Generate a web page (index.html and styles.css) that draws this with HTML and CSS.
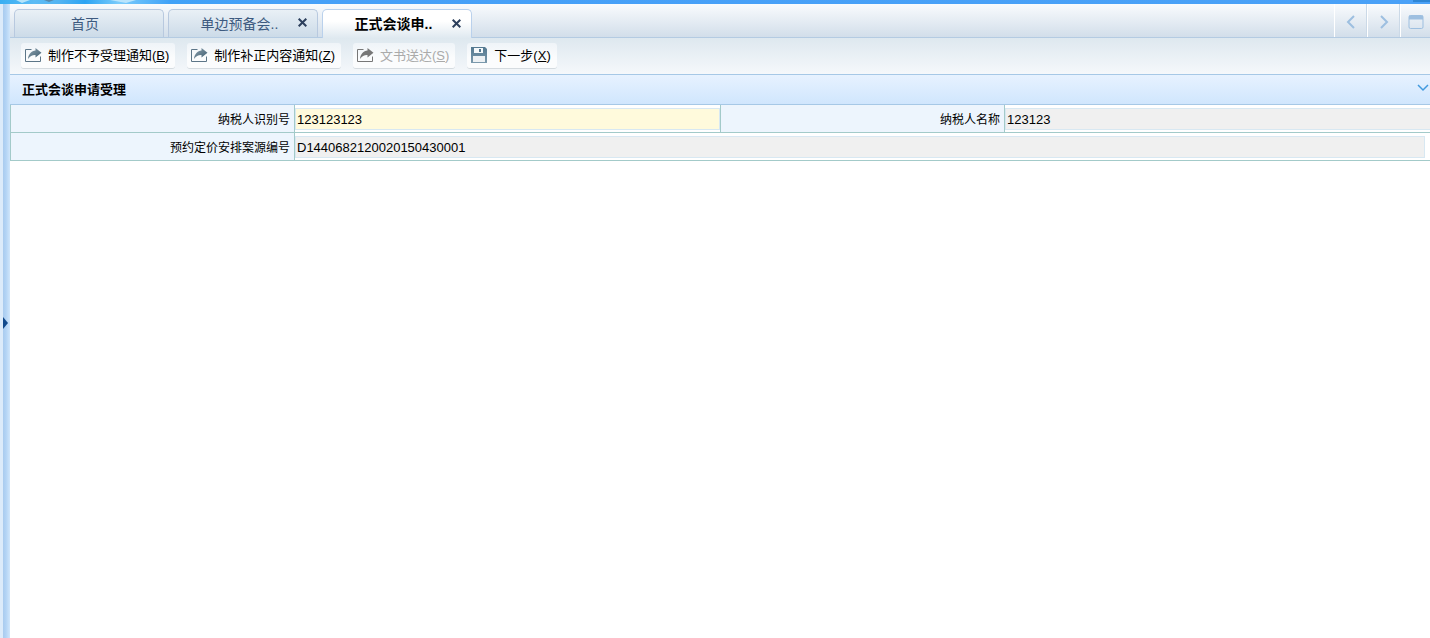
FILE: index.html
```html
<!DOCTYPE html>
<html lang="zh-CN">
<head>
<meta charset="utf-8">
<title>正式会谈申请受理</title>
<link rel="stylesheet" href="styles.css">
</head>
<body>
<svg class="defs" aria-hidden="true">
  <defs>
    <linearGradient id="arrow" x1="0" y1="0" x2="1" y2="1"><stop offset="0" stop-color="#8ba0ad"/><stop offset="1" stop-color="#3e5d70"/></linearGradient>
    <linearGradient id="disk" x1="0" y1="0" x2="0" y2="1"><stop offset="0" stop-color="#54788f"/><stop offset="1" stop-color="#7c9aad"/></linearGradient>
    <linearGradient id="clouds" x1="0" y1="0" x2="1" y2="0">
      <stop offset="0" stop-color="#38aef2"/><stop offset=".2" stop-color="#5cbcf5"/><stop offset=".35" stop-color="#52b4f2"/><stop offset=".5" stop-color="#2ba4f3"/><stop offset=".7" stop-color="#7cccfb"/><stop offset=".85" stop-color="#5cb8fa"/><stop offset="1" stop-color="#40a2f7"/>
    </linearGradient>
    <symbol id="share" viewBox="0 0 17 16">
      <path d="M6.500 2.500H.5v12h15V9.500" fill="none" stroke="#5d7688"/>
      <path d="M10.500 1 16.500 5.800 10.500 10.500V8C7.500 7.800 5 9 3 12 3.500 7 6.500 4 10.500 3.600z" fill="url(#arrow)"/>
    </symbol>
    <symbol id="share-off" viewBox="0 0 17 16">
      <path d="M6.500 2.500H.5v12h15V9.500" fill="none" stroke="#777"/>
      <path d="M10.500 1 16.500 5.800 10.500 10.500V8C7.500 7.800 5 9 3 12 3.500 7 6.500 4 10.500 3.600z" fill="#777"/>
    </symbol>
  </defs>
</svg>
<div class="sky">
  <svg width="170" height="4" viewBox="0 0 170 4" aria-hidden="true">
    <path d="M0 0h170v4H0z" fill="url(#clouds)"/><path d="M16 0h14l-8 3z" fill="#b5e4fa"/><path d="M44 0h10l-5 2z" fill="#5689ad"/>
    <path d="M110 0h26l-10 3z" fill="#b9e4fc"/>
  </svg>
  <span class="sky-end"></span>
</div>
<div class="frame">
  <div class="splitter">
    <button class="expand" aria-label="展开菜单"><svg width="5" height="12" viewBox="0 0 5 12"><path d="M0 0l5 6-5 6z" fill="#124a8c"/></svg></button>
  </div>
  <main class="main">
    <nav class="tabbar">
      <div class="tab"><button class="tab-name">首页</button></div>
      <div class="tab">
        <button class="tab-name">单边预备会..</button>
        <button class="close" aria-label="关闭"><svg width="9" height="9" viewBox="0 0 9 9"><path d="M.7.7l7.600 7.600M8.300.7L.7 8.300"/></svg></button>
      </div>
      <div class="tab active">
        <button class="tab-name">正式会谈申..</button>
        <button class="close" aria-label="关闭"><svg width="9" height="9" viewBox="0 0 9 9"><path d="M.7.7l7.600 7.600M8.300.7L.7 8.300"/></svg></button>
      </div>
      <div class="tab-tools">
        <button class="tool" aria-label="向左"><svg width="16" height="16" viewBox="0 0 16 16"><path d="M11 2L5 8l6 6"/></svg></button>
        <button class="tool" aria-label="向右"><svg width="16" height="16" viewBox="0 0 16 16"><path d="M5 2l6 6-6 6"/></svg></button>
        <button class="tool" aria-label="最大化"><svg width="16" height="16" viewBox="0 0 16 16"><rect class="thin" x="1" y="1.500" width="14" height="13" rx="1.500"/><path d="M1 3.500h14" /></svg></button>
      </div>
    </nav>
    <div class="toolbar">
      <button class="action"><svg class="icon"><use href="#share"/></svg><span>制作不予受理通知(<u>B</u>)</span></button>
      <button class="action"><svg class="icon"><use href="#share"/></svg><span>制作补正内容通知(<u>Z</u>)</span></button>
      <button class="action" disabled><svg class="icon"><use href="#share-off"/></svg><span>文书送达(<u>S</u>)</span></button>
      <button class="action"><svg class="icon" viewBox="0 0 17 16"><path d="M0 0h14l2 2v14H0z" fill="url(#disk)"/><path d="M3 1h9v5H3z" fill="#f4f8fa"/><path d="M8 2h2v3H8z" fill="#54788f"/><path d="M2 9h12v6H2z" fill="#edf1f4"/></svg><span>下一步(<u>X</u>)</span></button>
    </div>
    <section>
      <header class="panel-head">
        <h1>正式会谈申请受理</h1>
        <button class="collapse" aria-label="收起"><svg width="12" height="8" viewBox="0 0 12 8"><path d="M1 1l5 5 5-5" fill="none" stroke="#429ade" stroke-width="1.500"/></svg></button>
      </header>
      <div class="form">
        <label for="tax-id">纳税人识别号</label>
        <div class="cell"><input class="required" id="tax-id" value="123123123"></div>
        <label for="tax-name">纳税人名称</label>
        <div class="cell flush"><input id="tax-name" value="123123" readonly></div>
        <label for="case-no">预约定价安排案源编号</label>
        <div class="cell wide"><input id="case-no" value="D1440682120020150430001" readonly></div>
      </div>
    </section>
  </main>
</div>
</body>
</html>
```
FILE: styles.css
```css
* { box-sizing: border-box; }
body {
  margin: 0;
  height: 100vh;
  display: flex;
  flex-direction: column;
  overflow: hidden;
  background: #fff;
  color: #000;
  font: 13px "Liberation Sans", "Noto Sans CJK SC", sans-serif;
}
button { margin: 0; padding: 0; border: 0; background: none; font: inherit; color: inherit; }
svg { display: block; }
.defs { position: absolute; width: 0; height: 0; }

.sky { display: flex; justify-content: space-between; height: 4px; background: linear-gradient(90deg, #38a4f6, #45a0f8 20%, #4aa1f7); }
.sky-end { width: 17px; height: 2px; background: #2f86d5; }

.frame { flex: 1; display: flex; min-height: 0; }
.splitter {
  flex: none;
  display: flex;
  align-items: center;
  width: 10px;
  padding: 4px 0 0 3px;
  background: linear-gradient(90deg, #dcebfa 3px, #a9cbee 3px, #b3d4f5 6px, #d0e6fb 10px);
}
.main { flex: 1; min-width: 0; }

.tabbar {
  display: flex;
  align-items: flex-end;
  gap: 4px;
  height: 34px;
  padding-left: 4px;
  border-bottom: 1px solid #b4cbe2;
  background: linear-gradient(#f9fbfd, #d2deea);
}
.tab {
  display: flex;
  align-items: center;
  width: 150px;
  height: 28px;
  border: 1px solid #b8c9df;
  border-bottom: 0;
  border-radius: 5px 5px 0 0;
  background: linear-gradient(#e9f0f6, #ccdbe8);
  color: #3d5a80;
  font-size: 14px;
}
.tab-name { flex: 1; padding: 0 8px 1px 0; text-align: center; white-space: nowrap; }
.tab-name:not(:only-child) { padding-left: 22px; padding-right: 10px; }
.close { width: 19px; padding-bottom: 2px; }
.close path { stroke: #2c3f5c; stroke-width: 2; }
.active {
  height: 29px;
  margin-bottom: -1px;
  border-color: #bad1ec;
  background: linear-gradient(#fff 40%, #dfe9f0);
  color: #000;
  font-weight: bold;
}
.active .tab-name { padding-bottom: 2px; }
.tab-tools { display: flex; align-self: stretch; margin-left: auto; }
.tool {
  display: flex;
  align-items: center;
  justify-content: center;
  width: 33px;
  padding-top: 3px;
  border-left: 1px solid #fff;
  box-shadow: -1px 0 #cbd9e7;
}
.tool:first-child { box-shadow: none; }
.tool:last-child { width: 30px; }
.tool path { fill: none; stroke: #9dbfe0; stroke-width: 2; }
.tool rect + path { stroke-width: 4; }
.thin { fill: none; stroke: #9dbfe0; }

.toolbar {
  display: flex;
  align-items: center;
  gap: 12px;
  height: 36px;
  padding: 0 11px 1px;
  background: linear-gradient(#dee8ef, #f5f8fb);
}
.action {
  display: flex;
  align-items: center;
  gap: 6px;
  height: 25px;
  padding: 0 6px 1px 4px;
  border-radius: 3px;
  background: linear-gradient(#eff4f8, #fbfcfd 60%);
  box-shadow: 0 1px #d5dbe0;
  white-space: nowrap;
}
.action span { padding-bottom: 1px; }
.action:disabled { color: #aaa; }
.icon { width: 17px; height: 16px; }

.panel-head {
  display: flex;
  align-items: center;
  justify-content: space-between;
  height: 31px;
  padding: 0 1px 0 12px;
  border: solid #a6c8e6;
  border-width: 1px 0;
  background: linear-gradient(#e7f2ff, #d0e6fd);
}
h1 { margin: 0; padding-bottom: 2px; font-size: 13px; }
.collapse { padding-bottom: 4px; }

.form { display: grid; grid-template-columns: 20% 30% 20% 30%; grid-auto-rows: 28px; }
.form label {
  display: flex;
  align-items: center;
  justify-content: flex-end;
  margin-right: -1px;
  padding: 0 4px 1px 0;
  border: solid #a3cac9;
  border-width: 0 1px 1px;
  background: #edf5fd;
  font-size: 12px;
}
.cell { padding: 3px 0 2px 1px; border-bottom: 1px solid #a3cac9; }
.wide { grid-column: span 3; padding-right: 5px; }
.cell input {
  display: block;
  width: 100%;
  height: 22px;
  padding: 0 1px;
  border: 1px solid #d8e8f2;
  background: #f0f0f0;
  color: #000;
  font: 13px "Liberation Sans", sans-serif;
}
.flush input { border-right: 0; }
.cell .required { background: #fffadc; }
```
